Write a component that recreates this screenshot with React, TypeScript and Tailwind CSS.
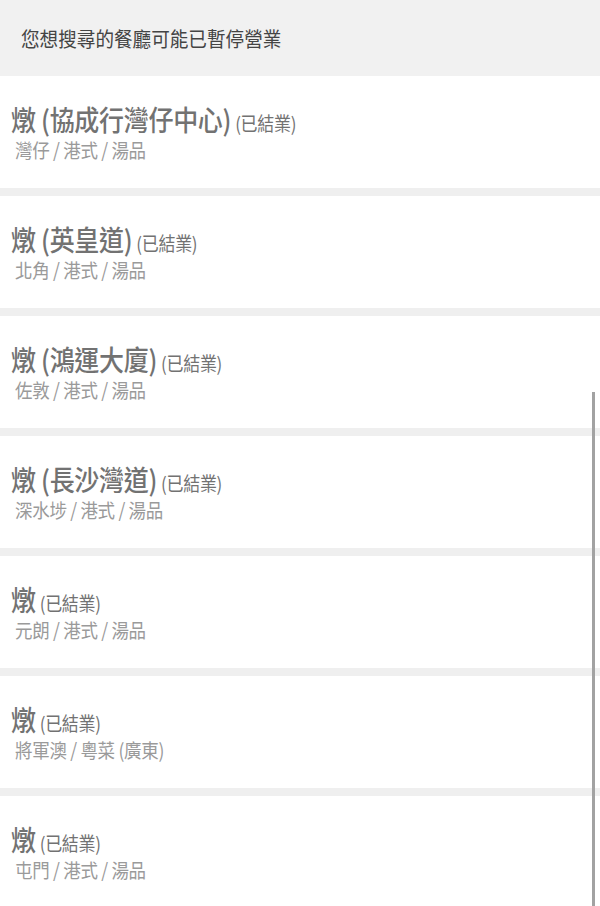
import React from "react";

const items = [
  { name: "燉 (協成行灣仔中心)", sub: "灣仔 / 港式 / 湯品" },
  { name: "燉 (英皇道)", sub: "北角 / 港式 / 湯品" },
  { name: "燉 (鴻運大廈)", sub: "佐敦 / 港式 / 湯品" },
  { name: "燉 (長沙灣道)", sub: "深水埗 / 港式 / 湯品" },
  { name: "燉", sub: "元朗 / 港式 / 湯品" },
  { name: "燉", sub: "將軍澳 / 粵菜 (廣東)" },
  { name: "燉", sub: "屯門 / 港式 / 湯品" },
];

export default function App() {
  return (
    <div
      className="relative w-[600px] h-[906px] overflow-hidden bg-[#efefef]"
      style={{ fontFamily: '"Noto Sans CJK TC", "Noto Sans", sans-serif' }}
    >
      <div className="h-[76px] bg-[#f1f1f1] flex items-center pl-[21px]">
        <span className="text-[18.6px] leading-[24px] text-[#444] inline-block scale-y-[1.1]">您想搜尋的餐廳可能已暫停營業</span>
      </div>
      <div className="flex flex-col gap-[8px]">
        {items.map((it, i) => (
          <div key={i} className="h-[112px] bg-white pl-[11px] pt-[29px] flex flex-col">
            <div className="flex items-baseline whitespace-nowrap text-[#727272] h-[28px] scale-y-[1.12]">
              <span className="text-[25px] leading-[28px] font-medium tracking-[-0.3px]">{it.name}</span>
              <span className="text-[17px] leading-[20px] ml-[4px] tracking-[-0.3px]">(已結業)</span>
            </div>
            <div className="mt-[7px] text-[17.5px] leading-[20px] text-[#9a9a9a] pl-[4px] whitespace-nowrap tracking-[-0.3px] scale-y-[1.12] origin-left">
              {it.sub}
            </div>
          </div>
        ))}
      </div>
      <div className="absolute right-[5px] top-[392px] bottom-0 w-[3px] bg-[#a2a2a2]" />
    </div>
  );
}
